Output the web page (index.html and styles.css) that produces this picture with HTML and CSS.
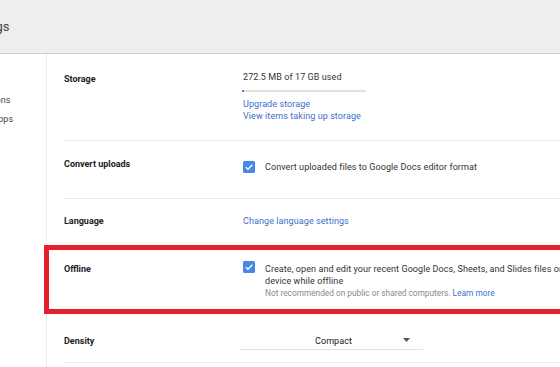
FILE: index.html
```
<!DOCTYPE html>
<html>
<head>
<meta charset="utf-8">
<title>Settings</title>
<link rel="stylesheet" href="styles.css">
</head>
<body>
	<div class="topbar">
		<h1 class="title">Settings</h1>
	</div>
	<div class="page">
		<ul class="sidebar">
			<li>General</li>
			<li>Notifications</li>
			<li>Manage apps</li>
		</ul>
		<div class="settings">
			<div class="row row-storage">
				<div class="label">Storage</div>
				<div class="value">
					<div>272.5 MB of 17 GB used</div>
					<div class="meter"><div class="meter-fill"></div></div>
					<a class="link" href="#">Upgrade storage</a>
					<a class="link" href="#">View items taking up storage</a>
				</div>
			</div>
			<div class="row row-convert">
				<div class="label">Convert uploads</div>
				<div class="value check-line">
					<svg class="checkbox" width="12" height="12" viewBox="0 0 12 12"><rect width="12" height="12" rx="1.5" fill="#4a86e8"/><path d="M2.8 6.2 L5 8.3 L9.3 3.8" fill="none" stroke="#fff" stroke-width="1.4"/></svg>
					<span>Convert uploaded files to Google Docs editor format</span>
				</div>
			</div>
			<div class="row row-language">
				<div class="label">Language</div>
				<div class="value"><a class="link" href="#">Change language settings</a></div>
			</div>
			<div class="row row-offline">
				<div class="label">Offline</div>
				<div class="value check-line">
					<svg class="checkbox" width="12" height="12" viewBox="0 0 12 12"><rect width="12" height="12" rx="1.5" fill="#4a86e8"/><path d="M2.8 6.2 L5 8.3 L9.3 3.8" fill="none" stroke="#fff" stroke-width="1.4"/></svg>
					<div class="offline-text">
						Create, open and edit your recent Google Docs, Sheets, and Slides files on this device while offline
						<div class="note">Not recommended on public or shared computers. <a class="link-inline" href="#">Learn more</a></div>
					</div>
				</div>
			</div>
			<div class="row row-density">
				<div class="label">Density</div>
				<div class="value">
					<div class="select">
						<span>Compact</span>
						<svg class="caret" width="7" height="4" viewBox="0 0 7 4"><path d="M0 0 H7 L3.5 4 Z" fill="#555"/></svg>
					</div>
				</div>
			</div>
		</div>
	</div>
	<div class="highlight"></div>
</body>
</html>
```

FILE: styles.css
```
html,body{margin:0;padding:0;}
body{
	font-family: Roboto, "Liberation Sans", Arial, sans-serif;
	font-size: 9px;
	line-height: 12px;
	letter-spacing: 0.08px;
	color: #333;
	background: #fff;
	overflow: hidden;
	height: 367px;
}
.topbar{
	height: 53px;
	background: #eeeeee;
	border-bottom: 1px solid #cfcfcf;
	display: flex;
	align-items: center;
}
.title{
	margin: 0 0 0 -38px;
	font-size: 13px;
	font-weight: 400;
	color: #444;
	line-height: 16px;
	padding-top: 1px;
	letter-spacing: 0;
}
.page{display: flex;height: 313px;}
.sidebar{
	margin: 0;
	padding: 18px 0 0;
	width: 46px;
	border-right: 1px solid #ececec;
	overflow: hidden;
	flex: none;
}
.sidebar li{
	list-style: none;
	height: 19px;
	line-height: 19px;
	margin-left: -42px;
	white-space: nowrap;
	color: #444;
}
.settings{flex: 1;}
.row{
	margin-left: 17px;
	display: grid;
	grid-template-columns: 179px auto;
	border-bottom: 1px solid #ebebeb;
}
.label{
	font-weight: 700;
	color: #202124;
	letter-spacing: 0;
}
.value{display: flex; flex-direction: column; align-items: flex-start;}
.row-storage{padding: 17px 0 18px;}
.row-storage .label{padding-top: 2px;}
.row-convert{padding: 20px 0 25px;}
.row-convert .label{margin-top: -3px;}
.row-language{padding: 16px 0 19px;}
.row-offline{padding: 16px 0 14px;}
.row-density{padding: 21px 0 12px;}
.meter{
	width: 124px;
	height: 2px;
	margin: 7px 0 6px -1px;
	background: #e2e2e2;
}
.meter-fill{width: 2px;height: 2px;background: #4285f4;}
.link{color: #3b6fcc;text-decoration: none;}
.link-inline{color: #3b6fcc;text-decoration: none;}
.check-line{flex-direction: row;align-items: flex-start;gap: 10px;}
.checkbox{flex: none;margin-top: 0;}
.row-offline .checkbox{margin-top: -2px;}
.offline-text{width: 322px;}
.note{color: #8a8a8a;font-size: 8.3px;letter-spacing: 0;}
.select{
	margin-left: -3px;
	width: 183px;
	height: 14px;
	border-bottom: 1px solid #e2e2e2;
	display: flex;
	align-items: flex-start;
	color: #202124;
}
.select span{padding-left: 75px;flex: 1;}
.caret{margin: 3px 13px 0 0;}
.highlight{
	position: absolute;
	left: 44px;
	top: 245px;
	width: 516px;
	height: 69px;
	box-sizing: border-box;
	border: 5px solid #e5202a;
	border-right: 0;
}
```
